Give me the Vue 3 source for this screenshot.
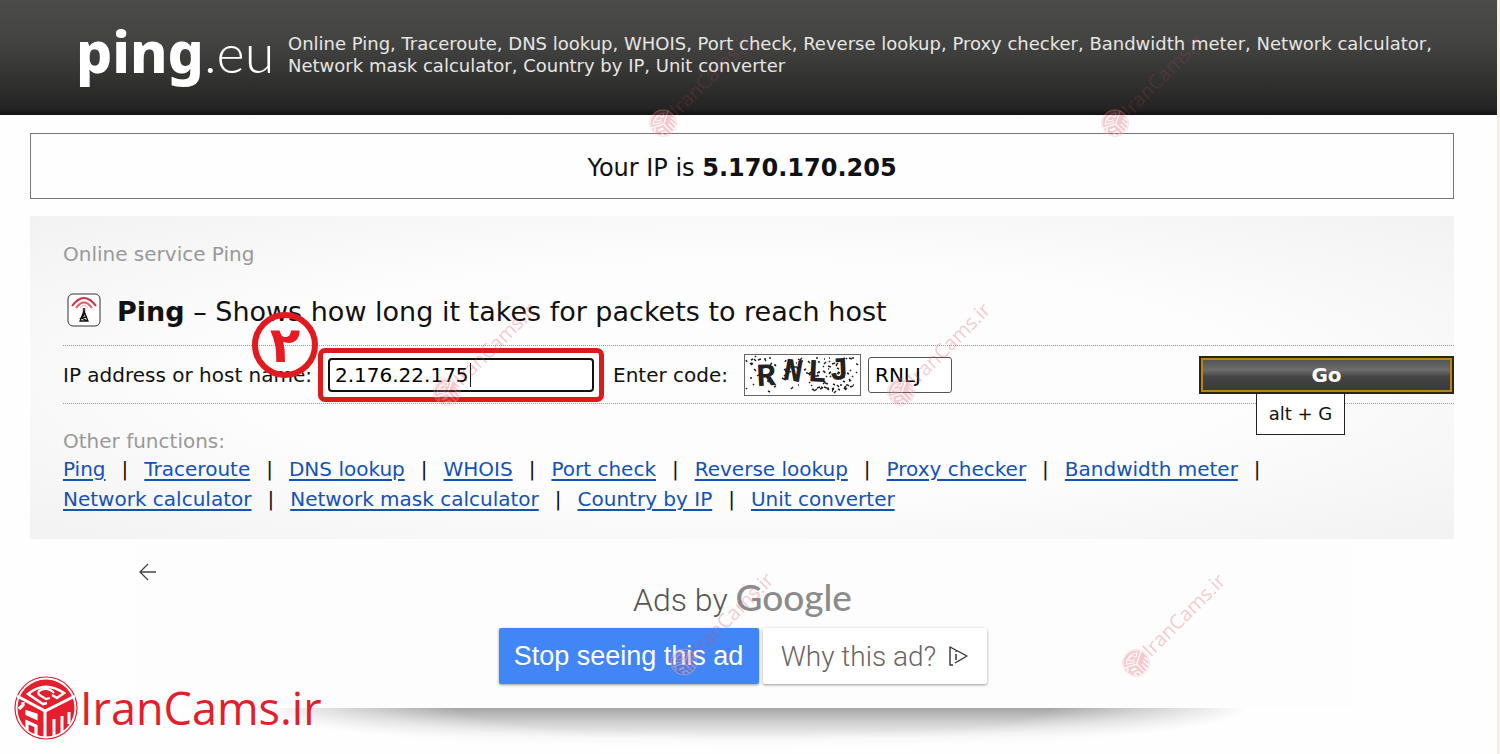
<script setup>
import { ref } from 'vue'

const host = ref('2.176.22.175')
const code = ref('RNLJ')
const rows = [
  ['Ping', 'Traceroute', 'DNS lookup', 'WHOIS', 'Port check', 'Reverse lookup', 'Proxy checker', 'Bandwidth meter'],
  ['Network calculator', 'Network mask calculator', 'Country by IP', 'Unit converter'],
]
const marks = [
  { id: 1, x: 663, y: 123, dark: true },
  { id: 2, x: 1115, y: 123, dark: true },
  { id: 3, x: 447, y: 392 },
  { id: 4, x: 901, y: 392 },
  { id: 5, x: 684, y: 662 },
  { id: 6, x: 1136, y: 663 },
]
function specks() {
  let s = 7
  const rnd = () => (s = (s * 16807) % 2147483647) / 2147483647
  let d = ''
  for (let i = 0; i < 130; i++) {
    const x = Math.round(3 + rnd() * 110)
    const y = Math.round(3 + rnd() * 35)
    const dx = Math.round(rnd() * 6 - 3)
    const dy = Math.round(rnd() * 4 - 2)
    d += `M${x} ${y}l${dx || 2} ${dy}`
  }
  return d
}
const noise = specks()
</script>

<template>
  <div class="page">
    <svg class="defs" width="0" height="0" aria-hidden="true">
      <symbol id="cam-logo" viewBox="0 0 64 64">
        <circle cx="32" cy="32" r="31" fill="#fff" stroke="currentColor" stroke-width="1.2" />
        <circle cx="32" cy="32" r="28.5" fill="currentColor" />
        <g fill="none" stroke="#fff" stroke-width="3">
          <path d="M3 20L31 35L61 20M31 35V62" />
          <path d="M33 27L29 28L14 18Q31 4 50 17L43 22L38 19" stroke-width="2.6" />
          <path d="M40 17Q33 10 25 15Q23 18 27 20L32 23L36 22" stroke-width="2.2" />
          <path d="M5 33L9 29V26M13 54V46L22 50V60M13 36V38L22 42V39Z" stroke-width="3.2" />
          <path d="M40 60V43M48 57V40M55 48V36" stroke-width="3" />
        </g>
      </symbol>
    </svg>

    <header class="top">
      <a class="logo" href="#"><b>ping</b><span>.eu</span></a>
      <p class="tagline">
        Online Ping, Traceroute, DNS lookup, WHOIS, Port check, Reverse lookup, Proxy checker, Bandwidth meter, Network calculator,
        Network mask calculator, Country by IP, Unit converter
      </p>
    </header>

    <main class="content">
      <section class="ip">Your IP is <b>5.170.170.205</b></section>

      <section class="service">
        <p class="crumb">Online service Ping</p>
        <h1 class="title">
          <svg width="34" height="34" viewBox="0 0 34 34" aria-hidden="true">
            <rect x="1" y="1" width="32" height="32" rx="5" fill="#fff" stroke="#333" />
            <path d="M5 13Q17 -3 29 13" fill="none" stroke="#cf2f42" stroke-width="2" />
            <path d="M9 15Q17 4 25 15" fill="none" stroke="#dd5b69" stroke-width="1.8" />
            <path d="M13 15Q17 10 21 15" fill="none" stroke="#f0b3ba" />
            <path d="M17 15V19" stroke="#8c1c28" stroke-width="2.4" />
            <path d="M17 18L13 28H21L17 18V22L14 25L20 24M14 25L21 28" fill="none" stroke="#111" stroke-width="1.3" />
          </svg>
          <span><b>Ping</b> – Shows how long it takes for packets to reach host</span>
        </h1>
        <form class="form" @submit.prevent>
          <label class="host-label" for="host">IP address or host name:</label>
          <span class="host">
            <input id="host" v-model="host" type="text" />
            <i class="caret"></i>
            <b class="step">۲</b>
          </span>
          <label for="code">Enter code:</label>
          <svg class="captcha" width="117" height="42" viewBox="0 0 117 42" role="img" aria-label="RNLJ">
            <rect x=".5" y=".5" width="116" height="41" fill="#fff" stroke="#666" />
            <path :d="noise" fill="none" stroke="#222" stroke-width="1.5" />
            <g class="letters">
              <text x="13" y="32" transform="rotate(-3 13 32)">R</text>
              <text x="38" y="25" transform="rotate(10 38 25)">N</text>
              <text x="63" y="27" transform="rotate(3 63 27)">L</text>
              <text x="86" y="26" transform="rotate(-3 86 26)">J</text>
            </g>
          </svg>
          <input id="code" v-model="code" type="text" />
          <span class="submit">
            <button type="submit" accesskey="g">Go</button>
            <span class="tip">alt + G</span>
          </span>
        </form>
        <p class="other">Other functions:</p>
        <nav>
          <p v-for="(row, r) in rows" :key="r" class="links">
            <template v-for="(item, i) in row" :key="item">
              <a href="#">{{ item }}</a><i v-if="r === 0 || i < row.length - 1">|</i>
            </template>
          </p>
        </nav>
      </section>
    </main>

    <section class="ad">
      <button class="back" type="button" aria-label="Back">
        <svg width="18" height="18" viewBox="0 0 18 18"><path d="M17 9H2M9 1L1 9L9 17" fill="none" stroke="#444" stroke-width="1.3" /></svg>
      </button>
      <p class="ads-by">Ads by <span>Google</span></p>
      <div class="ad-buttons">
        <button class="stop" type="button">Stop seeing this ad</button>
        <button class="why" type="button">
          Why this ad?
          <svg width="20" height="22" viewBox="0 0 20 22" aria-hidden="true">
            <path d="M5 20H2V2L19 11L7 18" fill="none" stroke="#333" stroke-width="1.4" stroke-linejoin="round" />
            <path d="M8 9V15M8 6V7" stroke="#333" stroke-width="1.5" />
          </svg>
        </button>
      </div>
    </section>
    <div class="shadow"></div>

    <div class="brand">
      <svg width="64" height="64"><use href="#cam-logo" /></svg>
      <span>IranCams.ir</span>
    </div>

    <div
      v-for="m in marks"
      :key="m.id"
      class="mark"
      :class="{ dark: m.dark }"
      :style="{ left: m.x + 'px', top: m.y + 'px' }"
      aria-hidden="true"
    >
      <svg width="28" height="28"><use href="#cam-logo" /></svg>
      <span>IranCams.ir</span>
    </div>
  </div>
</template>

<style>
body { margin: 0; background: #fefefe; }
</style>

<style scoped>
* { box-sizing: border-box; }
p, h1 { margin: 0; font-weight: 400; }
button, input { font: inherit; }
.page {
  position: relative;
  min-height: 100vh;
  overflow: hidden;
  border-right: 3px solid #f3f1d4;
  font: 20px/30px "DejaVu Sans", Verdana, sans-serif;
  color: #111;
}
.defs { position: absolute; }
.top {
  display: flex;
  align-items: flex-start;
  height: 115px;
  padding-left: 76px;
  background: linear-gradient(#4b4b49, #424240 40%, #232323 95%, #111);
}
.logo {
  display: flex;
  align-items: baseline;
  flex: none;
  width: 212px;
  padding-top: 13px;
  color: #fff;
  text-decoration: none;
}
.logo b { font: 800 57px/76px "Noto Sans", sans-serif; }
.logo span { font: 300 54px/76px Lato, sans-serif; }
.tagline { padding-top: 33px; font-size: 18px; line-height: 22px; color: #e6e6e4; }
.content { padding: 18px 43px 0 30px; }
.ip {
  height: 66px;
  border: 1px solid #777;
  font-size: 24px;
  line-height: 68px;
  text-align: center;
}
.service {
  height: 323px;
  margin-top: 17px;
  padding: 23px 0 0 33px;
  background: radial-gradient(ellipse at center, #fdfdfd 50%, #f2f2f2 100%);
}
.crumb, .other { color: #999; }
.title {
  display: flex;
  align-items: center;
  gap: 16px;
  height: 76px;
  padding: 6px 0 0 4px;
  font-size: 27px;
}
.title span { padding-top: 4px; }
.form {
  position: relative;
  display: flex;
  align-items: center;
  height: 59px;
  padding-top: 1px;
  border-top: 1px dotted #999;
  border-bottom: 1px dotted #999;
}
label { flex: none; }
.host-label { width: 255px; }
.host {
  position: relative;
  flex: none;
  width: 286px;
  height: 54px;
  margin-right: 9px;
  padding: 5px;
  border: 5px solid #dc1a1c;
  border-radius: 7px;
}
.host input {
  display: block;
  width: 100%;
  height: 34px;
  padding: 0 5px;
  border: 2px solid #111;
  border-radius: 4px;
  outline: none;
  background: #fff;
}
.caret { position: absolute; left: 147px; top: 10px; width: 1px; height: 24px; background: #111; }
.step {
  position: absolute;
  left: -71px;
  top: -41px;
  width: 66px;
  height: 66px;
  border: 6px solid #e01a1f;
  border-radius: 50%;
  color: #e61c24;
  font-size: 50px;
  line-height: 54px;
  text-align: center;
}
.captcha { flex: none; margin: 0 7px 0 16px; overflow: visible; }
.letters { font: 700 32px "Liberation Mono", monospace; fill: #222; }
#code {
  width: 84px;
  height: 36px;
  padding: 0 6px;
  border: 1px solid #555;
  border-radius: 3px;
  background: #fff;
}
.submit { position: relative; width: 255px; margin-left: auto; }
.submit button {
  display: block;
  width: 100%;
  height: 38px;
  padding: 0;
  border: 2px solid #2b2515;
  outline: 2px solid #b98412;
  outline-offset: -4px;
  background: linear-gradient(#505050, #6d6d6d 35%, #454545 55%, #383838);
  color: #fff;
  font-weight: 700;
}
.tip {
  position: absolute;
  left: 57px;
  top: 37px;
  width: 89px;
  border: 1px solid #222;
  background: #fff;
  font-size: 18px;
  line-height: 40px;
  text-align: center;
}
.other { padding-top: 23px; line-height: 28px; }
.links { line-height: 30px; margin-top: -1px; margin-bottom: 1px; white-space: nowrap; }
.links a { color: #1552b5; text-underline-offset: 3px; }
.links i { margin: 0 16px; font-style: normal; }
.ad {
  position: relative;
  height: 169px;
  margin: 0 146px 0 134px;
  padding-top: 34px;
  background: #fdfdfd;
}
.back { position: absolute; left: 5px; top: 24px; padding: 0; border: 0; background: none; line-height: 0; }
.ads-by { height: 55px; font: 300 32px/48px Roboto, sans-serif; color: #555; text-align: center; }
.ads-by span { font: 500 37px/48px Lato, sans-serif; color: #8b8b8b; }
.ad-buttons { display: flex; justify-content: center; gap: 4px; }
.ad-buttons button { height: 56px; padding: 0; border: 0; border-radius: 2px; box-shadow: 0 1px 3px #0006; }
.ad-buttons .stop { width: 260px; background: #4285f4; color: #fff; font: 27px "Liberation Sans", Arial, sans-serif; }
.ad-buttons .why {
  display: flex;
  align-items: center;
  justify-content: center;
  gap: 12px;
  width: 224px;
  background: #fff;
  color: #666;
  font: 300 28px Roboto, sans-serif;
}
.shadow {
  height: 40px;
  margin: 0 250px 0 260px;
  background: linear-gradient(#a6a6a6, #cfcfcf 35%, #f4f4f4 75%, #fefefe);
  mask-image: radial-gradient(ellipse 50% 110% at 50% 0, #000 60%, transparent);
}
.brand {
  position: absolute;
  left: 14px;
  top: 676px;
  display: flex;
  align-items: center;
  gap: 2px;
  color: #e31e2d;
  font: 45px/64px "Open Sans", sans-serif;
}
.mark {
  position: absolute;
  display: flex;
  align-items: center;
  height: 28px;
  margin: -14px 0 0 -14px;
  color: #e0455a;
  font: 20px/28px "Open Sans", sans-serif;
  opacity: 0.28;
  transform: rotate(-45deg);
  transform-origin: 14px 14px;
  pointer-events: none;
}
.mark.dark span { opacity: 0.6; }
</style>
